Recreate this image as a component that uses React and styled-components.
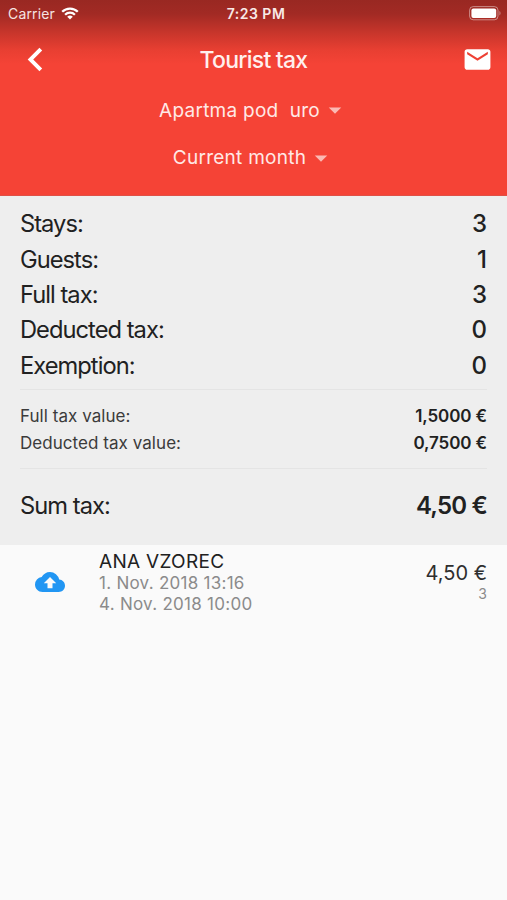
import styled, { createGlobalStyle } from 'styled-components';
import { MdArrowDropDown, MdBackup, MdChevronLeft, MdEmail } from 'react-icons/md';

const counts = [
  { label: 'Stays:', value: '3' },
  { label: 'Guests:', value: '1' },
  { label: 'Full tax:', value: '3' },
  { label: 'Deducted tax:', value: '0' },
  { label: 'Exemption:', value: '0' },
];

const rates = [
  { label: 'Full tax value:', value: '1,5000 €' },
  { label: 'Deducted tax value:', value: '0,7500 €' },
];

const App = () => {
  return (
    <Screen>
      <GlobalStyle />
      <Header>
        <StatusBar>
          <Carrier>
            <span>Carrier</span>
            <Wifi />
          </Carrier>
          <Time>7:23 PM</Time>
          <Battery />
        </StatusBar>
        <TitleBar>
          <BackButton aria-label="Back">
            <MdChevronLeft size={47} />
          </BackButton>
          <Title>Tourist tax</Title>
          <MailButton aria-label="Send by mail">
            <MdEmail size={31} />
          </MailButton>
        </TitleBar>
        <Dropdown>
          <span>{'Apartma pod  uro'}</span>
          <MdArrowDropDown size={30} />
        </Dropdown>
        <Dropdown>
          <span>Current month</span>
          <MdArrowDropDown size={30} />
        </Dropdown>
      </Header>
      <Summary>
        <Counts>
          {counts.map((row) => (
            <CountRow key={row.label}>
              <CountLabel>{row.label}</CountLabel>
              <CountValue>{row.value}</CountValue>
            </CountRow>
          ))}
        </Counts>
        <Rates>
          {rates.map((row) => (
            <RateRow key={row.label}>
              <span>{row.label}</span>
              <RateValue>{row.value}</RateValue>
            </RateRow>
          ))}
        </Rates>
        <SumRow>
          <CountLabel>Sum tax:</CountLabel>
          <SumValue>4,50 €</SumValue>
        </SumRow>
      </Summary>
      <Stay>
        <StayIcon>
          <MdBackup size={30} />
        </StayIcon>
        <StayInfo>
          <Guest>ANA VZOREC</Guest>
          <StayDate>1. Nov. 2018 13:16</StayDate>
          <StayDate>4. Nov. 2018 10:00</StayDate>
        </StayInfo>
        <StayTax>
          <Amount>4,50 €</Amount>
          <Nights>3</Nights>
        </StayTax>
      </Stay>
    </Screen>
  );
};

const Wifi = () => (
  <svg width="18" height="13" viewBox="0 0 18 13" fill="none" stroke="#fff" strokeWidth="2.3">
    <path d="M1.2 4.8a11 11 0 0 1 15.6 0" />
    <path d="M4.1 7.7a7 7 0 0 1 9.8 0" />
    <path d="M9 12.6L6.2 9.8a4 4 0 0 1 5.6 0z" fill="#fff" stroke="none" />
  </svg>
);

const Battery = () => (
  <svg width="33" height="15" viewBox="0 0 33 15">
    <rect x="0.6" y="0.6" width="28.4" height="13.2" rx="3.6" fill="none" stroke="#fff" strokeOpacity="0.45" />
    <rect x="2.4" y="2.4" width="24.8" height="9.6" rx="2" fill="#fff" />
    <path d="M30.5 5c1.3.6 1.3 3.8 0 4.4z" fill="#fff" fillOpacity="0.5" />
  </svg>
);

const GlobalStyle = createGlobalStyle`
  body {
    margin: 0;
    background: #fafafa;
    font-family: Inter, "Liberation Sans", sans-serif;
  }
`;

const Screen = styled.div`
  min-height: 900px;
  background: #fafafa;
  color: #212121;
`;

const Header = styled.header`
  height: 196px;
  box-sizing: border-box;
  color: #fff;
  background: linear-gradient(#992822 0px, #a22a24 14px, #c6352b 32px, #e83f32 50px, #f54336 64px);
  border-bottom: 1px solid #df5046;
`;

const StatusBar = styled.div`
  display: grid;
  grid-template-columns: 1fr auto 1fr;
  align-items: center;
  height: 27px;
  padding: 0 5px 0 8px;

  > svg {
    justify-self: end;
  }
`;

const Carrier = styled.div`
  display: flex;
  align-items: center;
  gap: 6px;
  font-size: 14px;
  letter-spacing: 0.15px;
  color: #f5e4e2;
`;

const Time = styled.div`
  padding-left: 2px;
  font-size: 14px;
  font-weight: 600;
  letter-spacing: 0.5px;
  color: #f8e9e7;
`;

const TitleBar = styled.div`
  display: grid;
  grid-template-columns: 60px 1fr 60px;
  align-items: center;
  height: 65px;
`;

const BackButton = styled.button`
  display: flex;
  padding: 0 0 0 12px;
  border: none;
  background: none;
  color: #fff;
  cursor: pointer;
`;

const MailButton = styled(BackButton)`
  padding: 0 0 0 15px;
`;

const Title = styled.h1`
  margin: 0;
  font-size: 23px;
  font-weight: 500;
  letter-spacing: -0.75px;
  text-align: center;
  color: #fff0ee;
`;

const Dropdown = styled.div`
  display: flex;
  align-items: center;
  justify-content: center;
  height: 36px;
  margin-bottom: 11.5px;
  padding-left: 2px;
  font-size: 19px;
  letter-spacing: 0.26px;
  white-space: pre;
  color: #ffe9e6;

  svg {
    color: #fbb9b3;
  }
`;

const Summary = styled.section`
  height: 349px;
  box-sizing: border-box;
  padding: 10px 20px 0;
  background: #eee;
`;

const Counts = styled.div`
  height: 183px;
`;

const CountRow = styled.div`
  display: flex;
  align-items: center;
  justify-content: space-between;
  height: 35.4px;
`;

const CountLabel = styled.span`
  font-size: 23.7px;
  letter-spacing: -0.97px;
`;

const CountValue = styled.span`
  font-size: 24px;
  font-weight: 500;
`;

const Rates = styled.div`
  height: 80px;
  box-sizing: border-box;
  padding-top: 12px;
  border-top: 1px solid #e4e4e4;
  border-bottom: 1px solid #e4e4e4;
`;

const RateRow = styled.div`
  display: flex;
  align-items: center;
  justify-content: space-between;
  height: 27px;
  font-size: 17px;
  letter-spacing: 0.05px;
  color: #3b3b3b;
`;

const RateValue = styled.span`
  font-weight: 600;
  letter-spacing: -0.1px;
  color: #212121;
`;

const SumRow = styled.div`
  display: flex;
  align-items: center;
  justify-content: space-between;
  height: 73px;
`;

const SumValue = styled.span`
  font-size: 24px;
  font-weight: 600;
  letter-spacing: -0.8px;
`;

const Stay = styled.article`
  display: flex;
  height: 74px;
  padding-right: 20px;
`;

const StayIcon = styled.div`
  display: flex;
  align-items: center;
  width: 64px;
  padding-left: 35px;
  color: #2196f3;
`;

const StayInfo = styled.div`
  flex: 1;
  padding-top: 5px;
`;

const Guest = styled.div`
  font-size: 19px;
  line-height: 23px;
  letter-spacing: 0.3px;
`;

const StayDate = styled.div`
  font-size: 17px;
  line-height: 20.6px;
  letter-spacing: 0.27px;
  color: #8b8b8b;
`;

const StayTax = styled.div`
  padding-top: 17px;
  text-align: right;
`;

const Amount = styled.div`
  font-size: 20px;
  line-height: 23px;
  color: #2e2e2e;
`;

const Nights = styled.div`
  font-size: 14px;
  line-height: 17px;
  color: #8b8b8b;
`;

export default App;
